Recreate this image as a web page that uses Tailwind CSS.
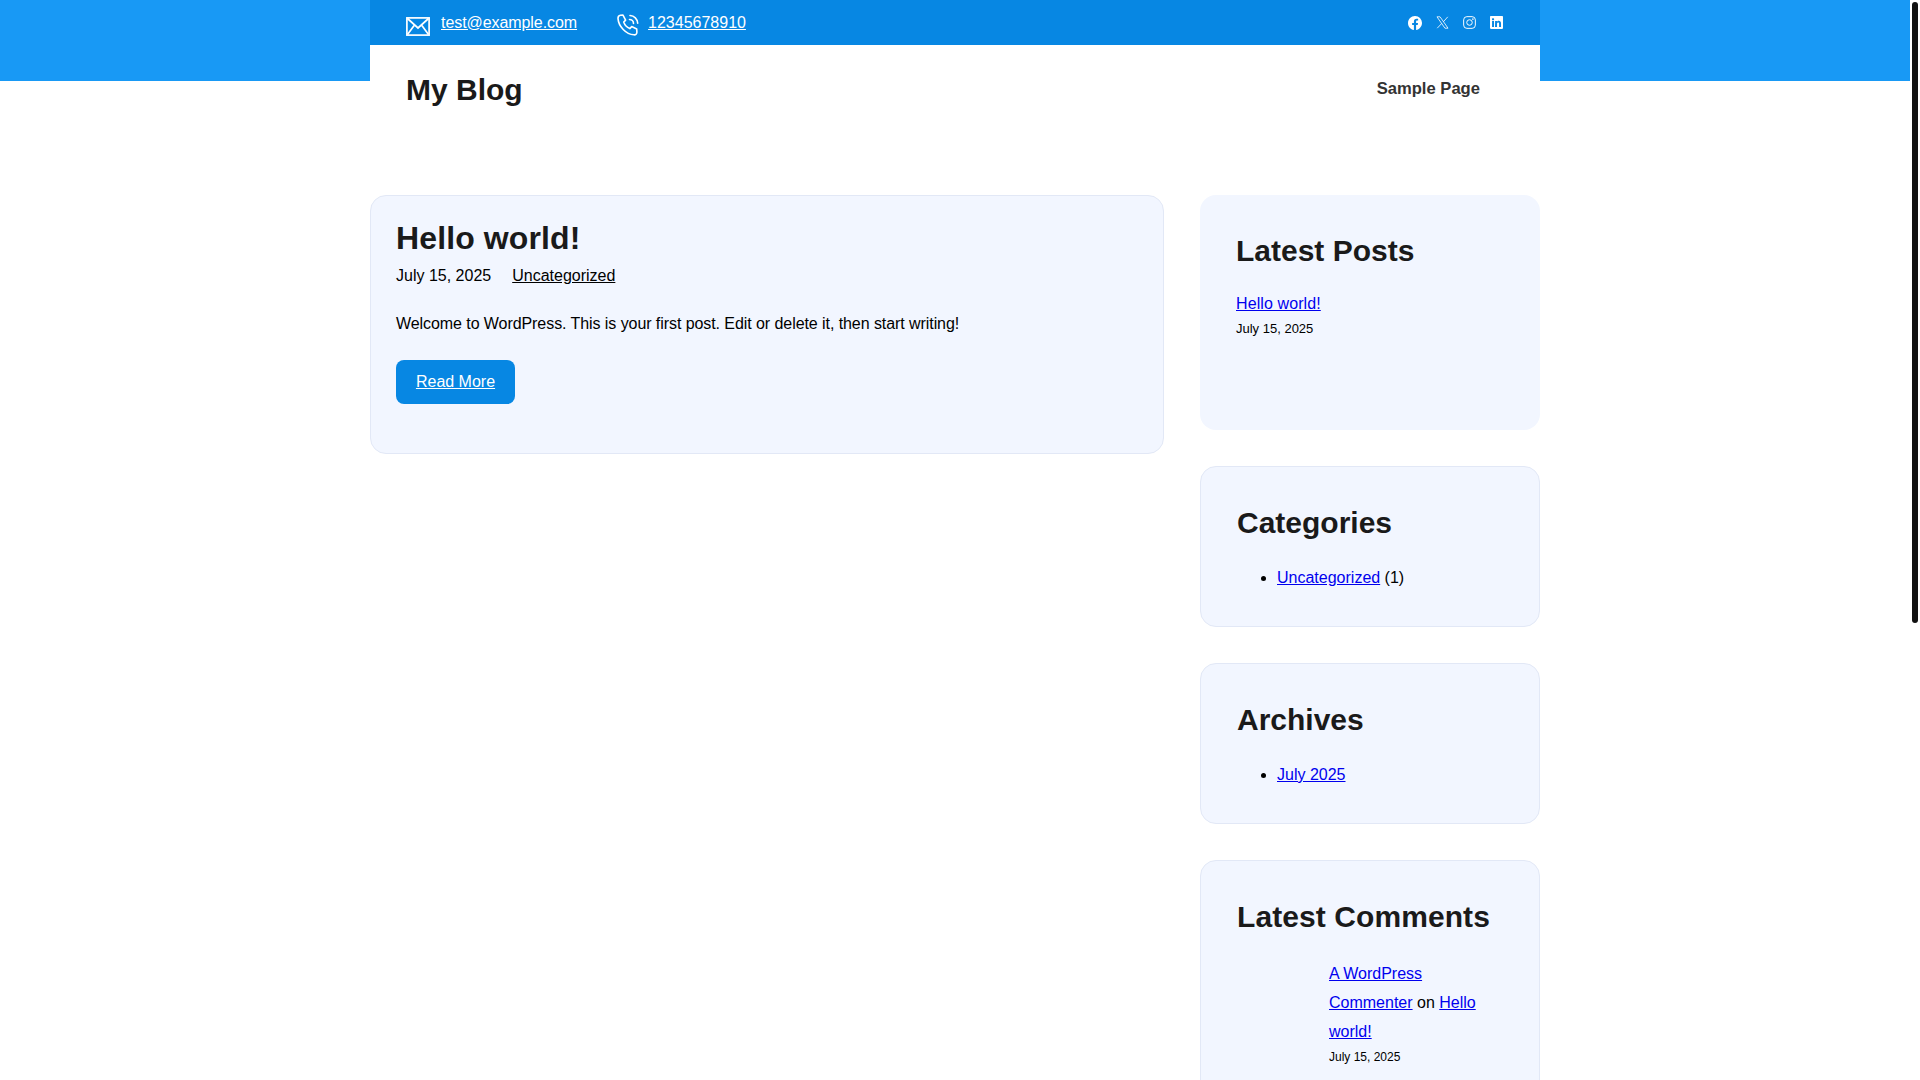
<!DOCTYPE html>
<html lang="en">

<head>
    <meta charset="UTF-8" />
    <title>My Blog</title>
    <script src="https://cdn.jsdelivr.net/npm/@tailwindcss/browser@4"></script>
</head>

<body class="bg-white h-[1080px] overflow-hidden flex font-['Liberation_Sans',Arial,sans-serif] text-base text-black">
    <div class="w-[1910px] shrink-0">
        <!-- blue band behind the header -->
        <div class="h-[81px] bg-[#1899f5]"></div>

        <div class="w-[1170px] mx-auto -mt-[81px]">
            <!-- top bar -->
            <div class="h-[45px] bg-[#0787e3] px-9 flex items-center text-white">
                <svg class="w-6 h-[19px] mt-[7px]" viewBox="0 0 24 19" fill="none" stroke="currentColor" stroke-width="1.7">
                    <rect x="0.9" y="0.9" width="22.2" height="17.2" />
                    <path d="M1.5 1.5 12 11l10.5-9.5M1.5 17.5 8.5 8M22.5 17.5 15.5 8" />
                </svg>
                <a href="#" class="ml-[11px] underline tracking-[-0.07px]">test@example.com</a>

                <svg class="w-[22px] h-[22px] ml-10 mt-[5px]" viewBox="0 0 22 22" fill="none" stroke="currentColor" stroke-width="1.6" stroke-linejoin="round" stroke-linecap="round">
                    <path d="M3.4 1.2 6 1.1l2.6 5-1.9 2c1 3 3 5.300 6.100 6.500l1.900-2 5 2.300.2 3.300c-.1 2-1.400 2.800-3 2.600C9 20.200 1.600 12.500 1 4.600.9 2.600 1.800 1.400 3.400 1.200Z" />
                    <path d="M12.500 5.500c2.200 0 4 1.800 4 4M13 1.500c4.200.200 7.500 3.500 7.700 7.800" />
                </svg>
                <a href="#" class="ml-[9px] underline">12345678910</a>

                <div class="ml-auto mr-[1px] flex items-center gap-[14px]">
                    <svg class="w-[14px] h-[14px]" viewBox="0 0 16 16" fill="currentColor">
                        <path d="M16 8.049c0-4.446-3.582-8.05-8-8.05C3.58 0-.002 3.603-.002 8.05c0 4.017 2.926 7.347 6.75 7.951v-5.625h-2.03V8.05H6.75V6.275c0-2.017 1.195-3.131 3.022-3.131.876 0 1.791.157 1.791.157v1.98h-1.009c-.993 0-1.303.621-1.303 1.258v1.51h2.218l-.354 2.326H9.25V16c3.824-.604 6.75-3.934 6.75-7.951" />
                    </svg>
                    <svg class="w-[13px] h-[13px]" viewBox="0 0 16 16" fill="none" stroke="currentColor" stroke-width="1">
                        <path d="M1.200 1h3.800l9.800 14H11z" />
                        <path d="M14.500 1 9 7.200M7 9.200 1.500 15" />
                    </svg>
                    <svg class="w-[13px] h-[13px]" viewBox="0 0 16 16" fill="none" stroke="currentColor" stroke-width="1.2">
                        <rect x="0.8" y="0.8" width="14.400" height="14.400" rx="4" />
                        <circle cx="8" cy="8" r="3.400" />
                        <circle cx="12.200" cy="3.800" r="0.500" fill="currentColor" />
                    </svg>
                    <svg class="w-[13px] h-[13px]" viewBox="0 0 16 16" fill="currentColor">
                        <path d="M0 1.146C0 .513.526 0 1.175 0h13.65C15.474 0 16 .513 16 1.146v13.708c0 .633-.526 1.146-1.175 1.146H1.175C.526 16 0 15.487 0 14.854zm4.943 12.248V6.169H2.542v7.225zm-1.2-8.212c.837 0 1.358-.554 1.358-1.248-.015-.709-.52-1.248-1.342-1.248S2.4 3.226 2.4 3.934c0 .694.521 1.248 1.327 1.248zm4.908 8.212V9.359c0-.216.016-.432.08-.586.173-.431.568-.878 1.232-.878.869 0 1.216.662 1.216 1.634v3.865h2.401V9.25c0-2.22-1.184-3.252-2.764-3.252-1.274 0-1.845.7-2.165 1.193v.025h-.016l.016-.025V6.169h-2.4c.03.678 0 7.225 0 7.225z" />
                    </svg>
                </div>
            </div>

            <!-- nav -->
            <div class="h-[90px] bg-white pl-9 pr-[60px] flex items-center justify-between">
                <a href="#" class="text-[30px] font-bold text-[#1a1a1a] leading-9">My Blog</a>
                <a href="#" class="text-[16.6px] font-bold text-[#333333] -mt-[2px]">Sample Page</a>
            </div>

            <!-- content -->
            <div class="mt-[60px] flex items-start gap-9">
                <article class="w-[794px] h-[259px] bg-[#f2f6ff] border border-[#e2e8f6] rounded-2xl px-[25px] pt-[22px]">
                    <h1 class="text-[32px] leading-10 font-bold text-[#1a1a1a] tracking-[0.12px]">Hello world!</h1>
                    <div class="mt-[3px] leading-[29px] flex gap-[21px]">
                        <span>July 15, 2025</span>
                        <a href="#" class="underline">Uncategorized</a>
                    </div>
                    <p class="mt-[19px] leading-[29px] tracking-[-0.07px]">Welcome to WordPress. This is your first post. Edit or delete it, then start writing!</p>
                    <a href="#" class="mt-[22px] w-[119px] h-11 bg-[#0787e3] rounded-lg text-white underline flex items-center justify-center">Read More</a>
                </article>

                <aside class="w-[340px] flex flex-col gap-9">
                    <section class="h-[235px] bg-[#f2f6ff] rounded-2xl pl-9 pt-[38px]">
                        <h2 class="text-[30px] leading-9 font-bold text-[#1a1a1a]">Latest Posts</h2>
                        <a href="#" class="mt-5 block leading-[29px] text-[#0000ee] underline tracking-[0.1px]">Hello world!</a>
                        <div class="mt-[1px] text-[13px] leading-5">July 15, 2025</div>
                    </section>

                    <section class="h-[161px] bg-[#f2f6ff] border border-[#e2e8f6] rounded-2xl pl-9 pt-[38px]">
                        <h2 class="text-[30px] leading-9 font-bold text-[#1a1a1a]">Categories</h2>
                        <ul class="mt-[22px] pl-10 list-disc leading-[29px]">
                            <li><a href="#" class="text-[#0000ee] underline">Uncategorized</a> (1)</li>
                        </ul>
                    </section>

                    <section class="h-[161px] bg-[#f2f6ff] border border-[#e2e8f6] rounded-2xl pl-9 pt-[38px]">
                        <h2 class="text-[30px] leading-9 font-bold text-[#1a1a1a]">Archives</h2>
                        <ul class="mt-[22px] pl-10 list-disc leading-[29px]">
                            <li><a href="#" class="text-[#0000ee] underline">July 2025</a></li>
                        </ul>
                    </section>

                    <section class="h-[300px] bg-[#f2f6ff] border border-[#e2e8f6] rounded-2xl pl-9 pr-9 pt-[38px]">
                        <h2 class="text-[30px] leading-9 font-bold text-[#1a1a1a] tracking-[0.08px]">Latest Comments</h2>
                        <div class="mt-6 pl-[92px] leading-[29px]">
                            <a href="#" class="text-[#0000ee] underline">A WordPress Commenter</a> on <a href="#" class="text-[#0000ee] underline">Hello world!</a>
                            <div class="text-xs leading-5 mt-[1px]">July 15, 2025</div>
                        </div>
                    </section>
                </aside>
            </div>
        </div>
    </div>

    <!-- scrollbar -->
    <div class="w-[10px] shrink-0 pl-[2px] pt-[2px]">
        <div class="w-[6px] h-[621px] bg-[#111111] rounded-[3px]"></div>
    </div>
</body>

</html>
